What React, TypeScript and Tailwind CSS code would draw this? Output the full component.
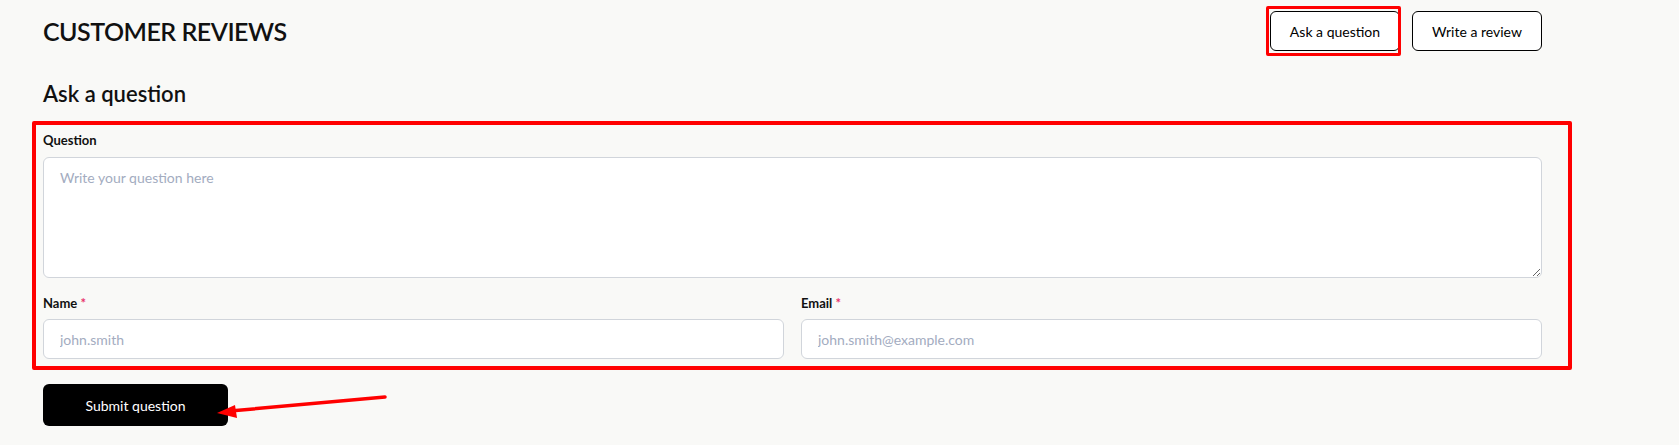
import React from "react";

export default function App() {
  return (
    <div className="relative min-h-screen bg-[#f9f9f7] font-['Lato',sans-serif] text-[#111]">
      <div className="ml-[43px] w-[1499px] pt-[11px] pb-[19px]">
        {/* header */}
        <div className="flex h-[40px] items-center justify-between">
          <h1 className="text-[25px] font-semibold tracking-[-0.5px] leading-[40px]">CUSTOMER REVIEWS</h1>
          <div className="flex gap-[12px]">
            <div className="relative">
              <button className="h-[40px] w-[130px] rounded-[6px] border border-black bg-white text-[14px] text-black">
                Ask a question
              </button>
              <div className="pointer-events-none absolute -left-[4px] -right-[1px] -top-[5px] -bottom-[5px] rounded-[2px] border-[3px] border-[#ff0000]" />
            </div>
            <button className="h-[40px] w-[130px] rounded-[6px] border border-black bg-white text-[14px] text-black">
              Write a review
            </button>
          </div>
        </div>

        <h2 className="mt-[29px] text-[22px] font-semibold leading-[28px]">Ask a question</h2>

        <form className="relative mt-[22px]" onSubmit={(e) => e.preventDefault()}>
          <div className="pointer-events-none absolute -left-[11px] -right-[30px] -top-[9px] -bottom-[11px] rounded-[2px] border-4 border-[#ff0000]" />
          <label className="block text-[13px] font-bold leading-[20px]">Question</label>
          <textarea
            className="mt-[7px] block h-[121px] w-full rounded-[6px] border border-[#d1d5db] bg-white px-[16px] py-[10px] text-[14px] leading-[20px] placeholder:text-[#a3acbf] outline-none"
            placeholder="Write your question here"
          />
          <div className="mt-[15px] grid grid-cols-2 gap-[17px]">
            <div>
              <label className="block text-[13px] font-bold leading-[20px]">
                Name <span className="text-[#e8336b]">*</span>
              </label>
              <input
                className="mt-[6px] block h-[40px] w-full rounded-[6px] border border-[#d1d5db] bg-white px-[16px] text-[14px] placeholder:text-[#a3acbf] outline-none"
                placeholder="john.smith"
              />
            </div>
            <div>
              <label className="block text-[13px] font-bold leading-[20px]">
                Email <span className="text-[#e8336b]">*</span>
              </label>
              <input
                className="mt-[6px] block h-[40px] w-full rounded-[6px] border border-[#d1d5db] bg-white px-[16px] text-[14px] placeholder:text-[#a3acbf] outline-none"
                placeholder="john.smith@example.com"
              />
            </div>
          </div>
        </form>

        <button className="mt-[25px] h-[42px] w-[185px] rounded-[6px] bg-black text-[14px] text-white">
          Submit question
        </button>
      </div>

      {/* annotation arrow */}
      <svg
        className="pointer-events-none absolute left-0 top-0"
        width="1679"
        height="445"
        viewBox="0 0 1679 445"
      >
        <line x1="385" y1="397" x2="230" y2="411" stroke="#ff0000" strokeWidth="3.5" strokeLinecap="round" />
        <polygon points="217,413 235,405 237,418" fill="#ff0000" />
      </svg>
    </div>
  );
}
